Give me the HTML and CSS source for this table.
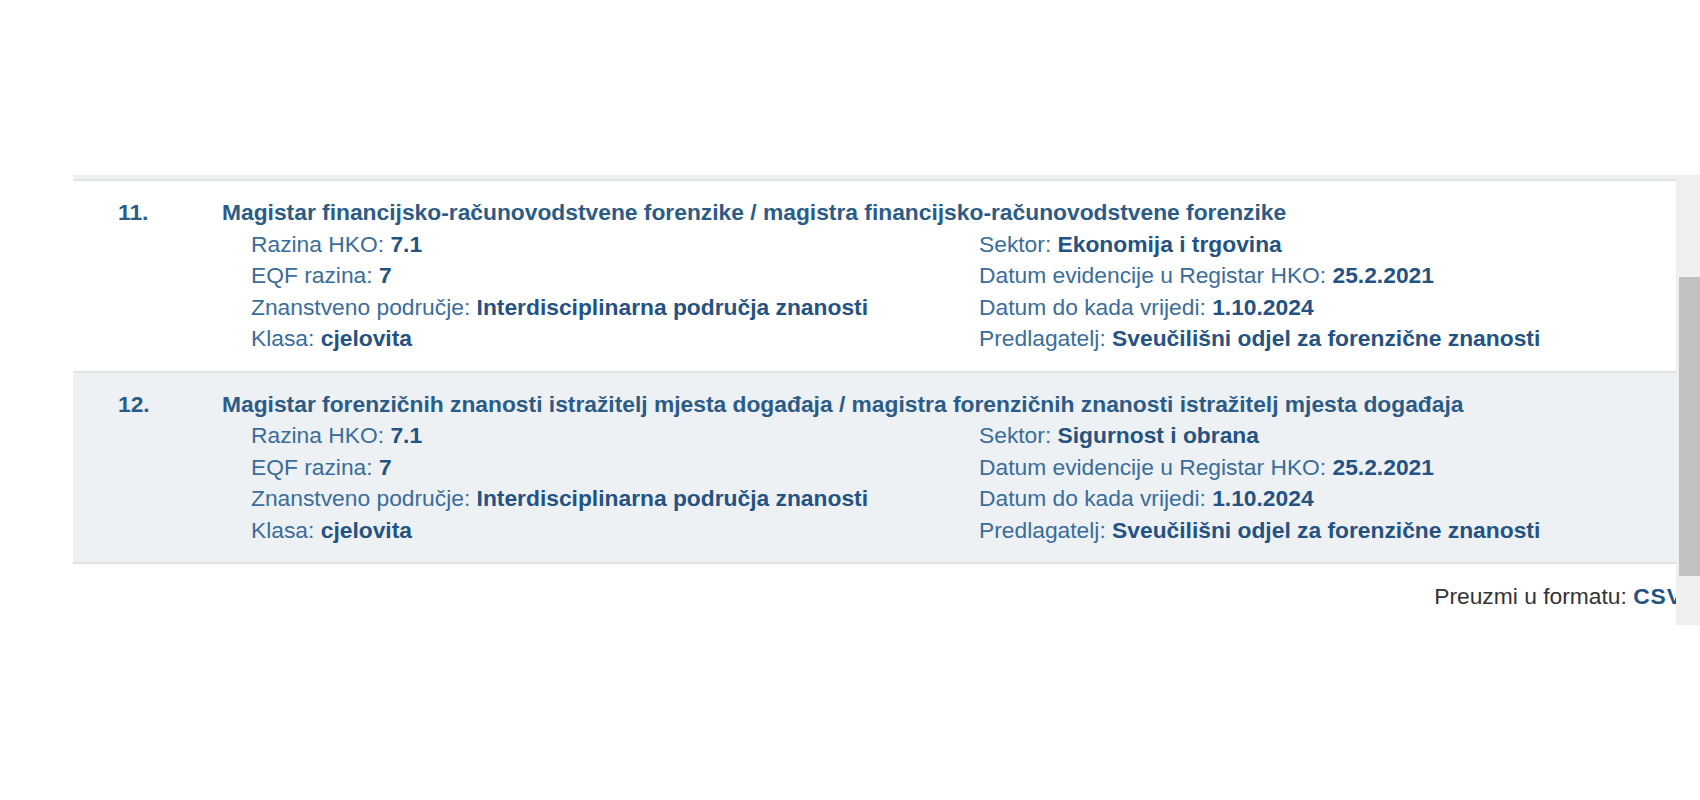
FILE: index.html
```html
<!DOCTYPE html>
<html lang="hr">
<head>
<meta charset="utf-8">
<title>Registar HKO</title>
<link rel="stylesheet" href="styles.css">
</head>
<body>
<div class="page">
  <div class="frame">
    <div class="viewport">
      <div class="list">
        <div class="head-band"></div>
        <div class="row">
          <div class="num">11.</div>
          <div class="body">
            <div class="title">Magistar financijsko-računovodstvene forenzike / magistra financijsko-računovodstvene forenzike</div>
            <div class="details">
              <div class="col">
                <div class="line">Razina HKO: <b>7.1</b></div>
                <div class="line">EQF razina: <b>7</b></div>
                <div class="line">Znanstveno područje: <b>Interdisciplinarna područja znanosti</b></div>
                <div class="line">Klasa: <b>cjelovita</b></div>
              </div>
              <div class="col">
                <div class="line">Sektor: <b>Ekonomija i trgovina</b></div>
                <div class="line">Datum evidencije u Registar HKO: <b>25.2.2021</b></div>
                <div class="line">Datum do kada vrijedi: <b>1.10.2024</b></div>
                <div class="line">Predlagatelj: <b>Sveučilišni odjel za forenzične znanosti</b></div>
              </div>
            </div>
          </div>
        </div>
        <div class="row alt">
          <div class="num">12.</div>
          <div class="body">
            <div class="title">Magistar forenzičnih znanosti istražitelj mjesta događaja / magistra forenzičnih znanosti istražitelj mjesta događaja</div>
            <div class="details">
              <div class="col">
                <div class="line">Razina HKO: <b>7.1</b></div>
                <div class="line">EQF razina: <b>7</b></div>
                <div class="line">Znanstveno područje: <b>Interdisciplinarna područja znanosti</b></div>
                <div class="line">Klasa: <b>cjelovita</b></div>
              </div>
              <div class="col">
                <div class="line">Sektor: <b>Sigurnost i obrana</b></div>
                <div class="line">Datum evidencije u Registar HKO: <b>25.2.2021</b></div>
                <div class="line">Datum do kada vrijedi: <b>1.10.2024</b></div>
                <div class="line">Predlagatelj: <b>Sveučilišni odjel za forenzične znanosti</b></div>
              </div>
            </div>
          </div>
        </div>
        <div class="footer">Preuzmi u formatu: <a class="csv" href="#">CSV</a></div>
      </div>
    </div>
    <div class="scrollbar"><div class="thumb"></div></div>
  </div>
</div>
</body>
</html>
```

FILE: styles.css
```css
html, body {
  margin: 0;
  padding: 0;
  background: #ffffff;
}
body {
  font-family: "Liberation Sans", Arial, sans-serif;
  font-size: 22.8px;
  line-height: 31.5px;
  color: #3a6d9a;
}
.page {
  padding-top: 175px;
  padding-left: 73px;
}
.frame {
  display: flex;
  height: 450px;
}
.viewport {
  flex: 0 0 1603px;
  overflow: hidden;
}
.list {
  width: 1610px;
}
.head-band {
  height: 4px;
  background: #edf1f4;
  border-bottom: 2px solid #dfe3e6;
}
.row {
  display: grid;
  grid-template-columns: 104px 1fr;
  padding: 16px 0 16px 45px;
  border-bottom: 2px solid #dfe3e6;
  background: #ffffff;
}
.row.alt {
  background: #edf1f4;
}
.num, .title {
  font-weight: bold;
  color: #2b5b87;
}
.details {
  display: grid;
  grid-template-columns: 728px 1fr;
  padding-left: 29px;
}
.line b {
  color: #245282;
}
.footer {
  text-align: right;
  margin-top: 17px;
  color: #333333;
}
.csv {
  color: #245282;
  font-weight: bold;
  text-decoration: none;
  letter-spacing: 1px;
}
.scrollbar {
  flex: 0 0 24px;
  background: #f0f0f0;
}
.thumb {
  margin-top: 102px;
  margin-left: 3px;
  height: 299px;
  background: #c1c1c1;
}
```
